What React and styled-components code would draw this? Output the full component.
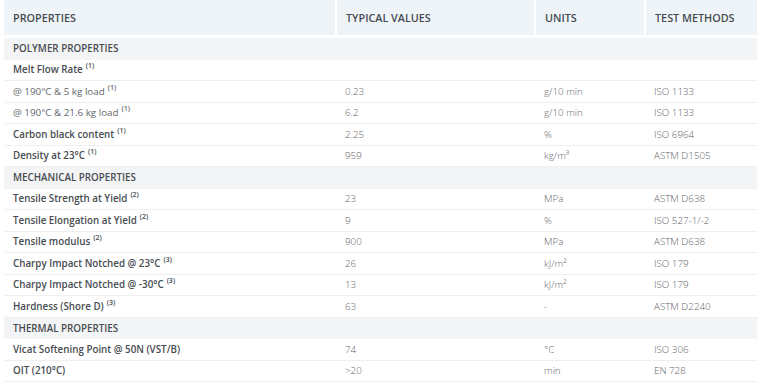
import styled, { createGlobalStyle } from "styled-components";

const GlobalStyle = createGlobalStyle`
  body {
    margin: 0;
    background: #ffffff;
    font-family: "Open Sans", "Liberation Sans", sans-serif;
  }
`;

const sections = [
  {
    title: "POLYMER PROPERTIES",
    rows: [
      { label: "Melt Flow Rate", note: 1 },
      { label: "@ 190°C & 5 kg load", note: 1, light: true, value: "0.23", unit: "g/10 min", method: "ISO 1133" },
      { label: "@ 190°C & 21.6 kg load", note: 1, light: true, value: "6.2", unit: "g/10 min", method: "ISO 1133" },
      { label: "Carbon black content", note: 1, value: "2.25", unit: "%", method: "ISO 6964" },
      { label: "Density at 23°C", note: 1, value: "959", unit: "kg/m³", method: "ASTM D1505" },
    ],
  },
  {
    title: "MECHANICAL PROPERTIES",
    rows: [
      { label: "Tensile Strength at Yield", note: 2, value: "23", unit: "MPa", method: "ASTM D638" },
      { label: "Tensile Elongation at Yield", note: 2, value: "9", unit: "%", method: "ISO 527-1/-2" },
      { label: "Tensile modulus", note: 2, value: "900", unit: "MPa", method: "ASTM D638" },
      { label: "Charpy Impact Notched @ 23°C", note: 3, value: "26", unit: "kJ/m²", method: "ISO 179" },
      { label: "Charpy Impact Notched @ -30°C", note: 3, value: "13", unit: "kJ/m²", method: "ISO 179" },
      { label: "Hardness (Shore D)", note: 3, value: "63", unit: "-", method: "ASTM D2240" },
    ],
  },
  {
    title: "THERMAL PROPERTIES",
    rows: [
      { label: "Vicat Softening Point @ 50N (VST/B)", value: "74", unit: "°C", method: "ISO 306" },
      { label: "OIT (210°C)", value: ">20", unit: "min", method: "EN 728" },
    ],
  },
];

const App = () => {
  return (
    <>
      <GlobalStyle />
      <StyledSheet.Wrap>
        <StyledSheet.Table>
          <colgroup>
            <col style={{ width: 332 }} />
            <col style={{ width: 199 }} />
            <col style={{ width: 110 }} />
            <col style={{ width: 112 }} />
          </colgroup>
          <thead>
            <tr>
              <StyledSheet.Head>PROPERTIES</StyledSheet.Head>
              <StyledSheet.Head>TYPICAL VALUES</StyledSheet.Head>
              <StyledSheet.Head>UNITS</StyledSheet.Head>
              <StyledSheet.Head>TEST METHODS</StyledSheet.Head>
            </tr>
          </thead>
          <tbody>
            {sections.map((section) => (
              <Section key={section.title} section={section} />
            ))}
          </tbody>
        </StyledSheet.Table>
      </StyledSheet.Wrap>
    </>
  );
};
export default App;

const Section = ({ section }) => (
  <>
    <tr>
      <StyledSheet.SectionCell colSpan={4}>{section.title}</StyledSheet.SectionCell>
    </tr>
    {section.rows.map((row) => (
      <tr key={row.label}>
        <StyledSheet.Label $light={row.light}>
          {row.label}
          {row.note && <StyledSheet.Note>({row.note})</StyledSheet.Note>}
        </StyledSheet.Label>
        <StyledSheet.Value>{row.value}</StyledSheet.Value>
        <StyledSheet.Value>{row.unit}</StyledSheet.Value>
        <StyledSheet.Value>{row.method}</StyledSheet.Value>
      </tr>
    ))}
  </>
);

const StyledSheet = {
  Wrap: styled.div`
    padding: 0 4px;
  `,

  Table: styled.table`
    width: 753px;
    border-collapse: collapse;
    table-layout: fixed;
  `,

  Head: styled.th`
    height: 35px;
    padding: 0 9px;
    background: #eef4f8;
    border-left: 2px solid #ffffff;
    border-right: 2px solid #ffffff;
    border-bottom: 3px solid #ffffff;
    text-align: left;
    font-size: 10.8px;
    font-weight: 600;
    color: #464b51;
    &:first-child {
      border-left: none;
    }
    &:last-child {
      border-right: none;
    }
  `,

  SectionCell: styled.td`
    height: 21.5px;
    padding: 0 9px;
    background: #f3f4f5;
    font-size: 9.8px;
    font-weight: 600;
    color: #484c51;
  `,

  Label: styled.td`
    height: 20.5px;
    padding: 0 9px;
    border-bottom: 1px solid #eeeff0;
    font-size: 9.8px;
    font-weight: ${(p) => (p.$light ? 400 : 600)};
    color: ${(p) => (p.$light ? "#63676b" : "#484c51")};
    white-space: nowrap;
  `,

  Note: styled.sup`
    margin-left: 3px;
    font-size: 7px;
    font-weight: 600;
    vertical-align: 5px;
    line-height: 0;
  `,

  Value: styled.td`
    height: 20.5px;
    padding: 0 9px;
    border-bottom: 1px solid #eeeff0;
    font-size: 9.8px;
    font-weight: 300;
    color: #5f6367;
    white-space: nowrap;
  `,
};
